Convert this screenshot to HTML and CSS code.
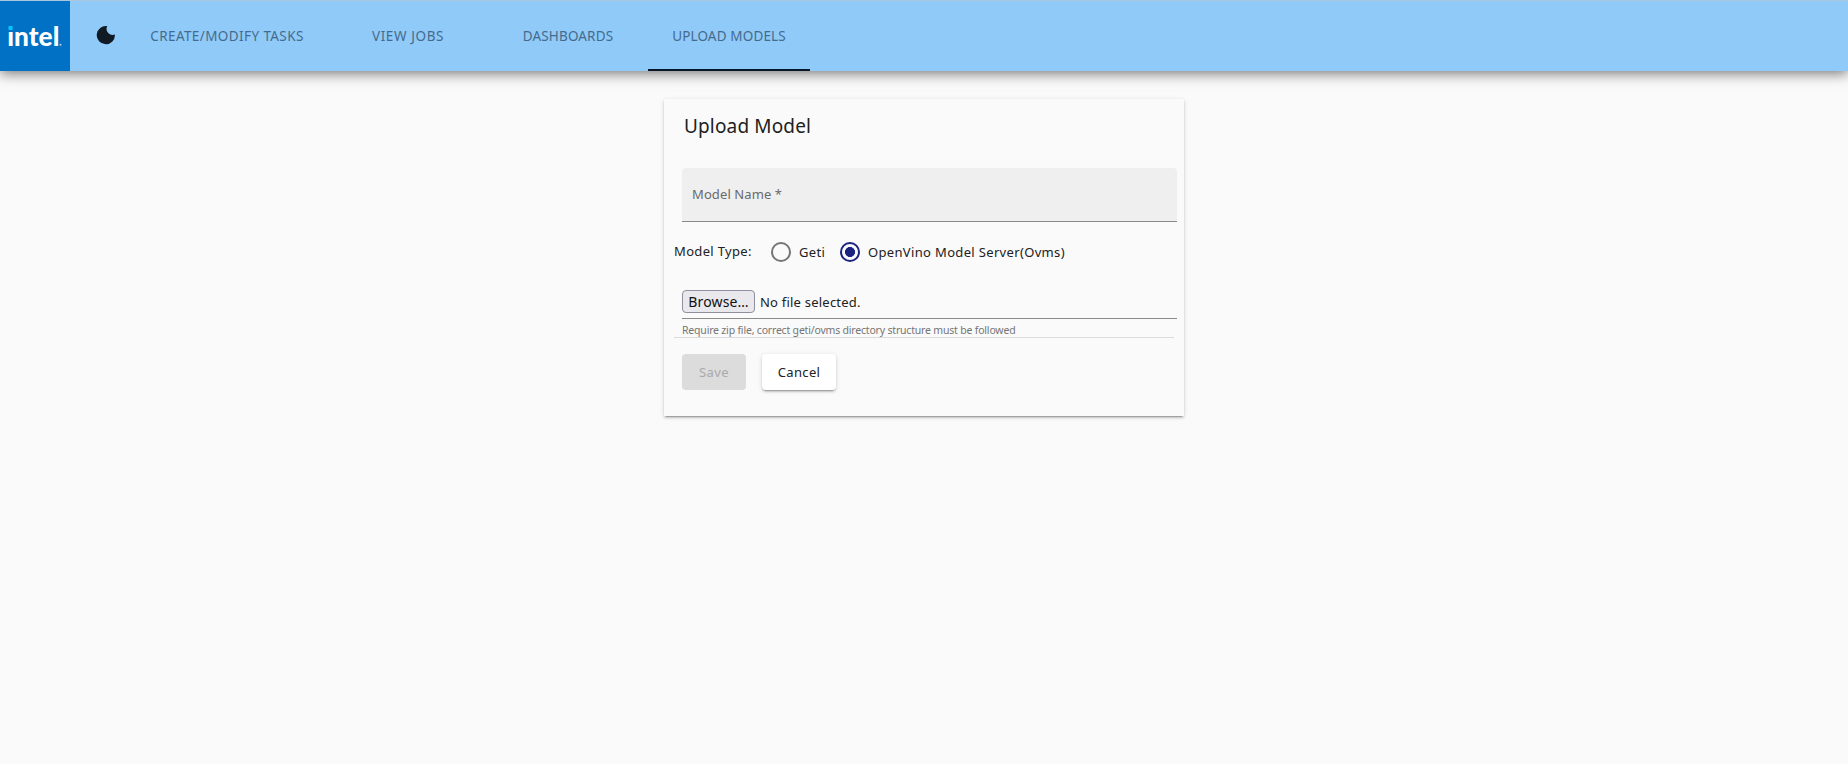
FILE: index.html
```
<!DOCTYPE html>
<html lang="en">
<head>
<meta charset="utf-8">
<title>Upload Model</title>
<link rel="stylesheet" href="styles.css">
</head>
<body>
<header class="toolbar">
  <svg class="logo" width="70" height="70" viewBox="0 0 70 70">
    <rect width="70" height="70" fill="#0071c5"/>
    <text class="logo-text" x="7.3" y="44.7" textLength="52" lengthAdjust="spacingAndGlyphs">intel</text>
    <rect x="7" y="22" width="7" height="8" fill="#0071c5"/>
    <rect x="8.5" y="25" width="4" height="4" fill="#00c7fd"/>
    <circle cx="60.5" cy="43.7" r="1" fill="#a9d3f2"/>
  </svg>
  <button class="theme" aria-label="Toggle theme">
    <svg width="20" height="20" viewBox="0 0 20 20"><path d="M11.2 1.1A6.2 6.2 0 0 0 18.9 9.6 9.1 9.1 0 1 1 11.2 1.1Z" fill="#0f1a24"/></svg>
  </button>
  <nav class="tabs">
    <a class="tab tab-tasks">CREATE/MODIFY TASKS</a>
    <a class="tab tab-jobs">VIEW JOBS</a>
    <a class="tab tab-dash">DASHBOARDS</a>
    <a class="tab active">UPLOAD MODELS</a>
  </nav>
</header>
<main class="card">
  <h1 class="title">Upload Model</h1>
  <div class="field">Model Name *</div>
  <div class="types">
    <span class="type-label">Model Type:</span>
    <i class="radio"></i><span class="geti">Geti</span>
    <i class="radio on"></i><span class="ovms">OpenVino Model Server(Ovms)</span>
  </div>
  <div class="file">
    <button class="browse">Browse…</button><span class="nofile">No file selected.</span>
  </div>
  <div class="hint">Require zip file, correct geti/ovms directory structure must be followed</div>
  <div class="actions">
    <button class="btn save">Save</button>
    <button class="btn cancel">Cancel</button>
  </div>
</main>
</body>
</html>
```
FILE: styles.css
```
* { box-sizing: border-box; }
body {
  margin: 0;
  min-height: 764px;
  background: #fafafa;
  color: #212121;
  font: 13px/20px "Noto Sans", sans-serif;
}
button { font: inherit; padding: 0; border: 0; }
.toolbar {
  height: 71px;
  display: flex;
  background: #90caf9;
  border-top: 1px solid #a9c6dc;
  box-shadow: 0 3px 12px rgba(0, 0, 0, .5);
}
.logo { display: block; }
.logo-text { font: 900 27px Lato, sans-serif; fill: #fff; }
.theme {
  width: 56px;
  padding: 4px 0 0 16px;
  background: none;
  display: flex;
  align-items: center;
  justify-content: center;
  height: 64px;
}
.tabs { display: flex; }
.tab {
  width: 160px;
  display: flex;
  align-items: center;
  justify-content: center;
  color: #456b8c;
  font-size: 13.5px;
  letter-spacing: .15px;
  white-space: nowrap;
}
.tab-tasks { width: 202px; letter-spacing: .4px; }
.tab-jobs { letter-spacing: .6px; }
.active { width: 162px; border-bottom: 2px solid #08162a; padding-top: 2px; }
.card {
  width: 520px;
  height: 317px;
  margin: 28px auto 0;
  padding-top: 15px;
  background: #fafafa;
  box-shadow: 0 3px 1px -2px rgba(0,0,0,.2), 0 2px 2px rgba(0,0,0,.14), 0 1px 5px rgba(0,0,0,.12);
}
.title { margin: 0 0 30px 20px; font-size: 19px; line-height: 24px; font-weight: 400; letter-spacing: .15px; }
.field {
  width: 495px;
  height: 54px;
  margin-left: 18px;
  padding: 16px 10px;
  background: #efefef;
  border-bottom: 1px solid #8a8a8a;
  border-radius: 4px 4px 0 0;
  color: #6a6a6a;
  letter-spacing: .1px;
}
.types { display: flex; align-items: center; height: 20px; margin: 20px 0 0 10px; white-space: nowrap; letter-spacing: .34px; }
.type-label { width: 97px; padding-bottom: 2px; }
.radio { width: 20px; height: 20px; border: 2px solid #757575; border-radius: 50%; }
.on { border-color: #1a237e; background: radial-gradient(circle, #1a237e 4.7px, transparent 5.3px); }
.geti { width: 49px; padding-left: 8px; }
.ovms { padding-left: 8px; }
.file {
  display: flex;
  width: 495px;
  height: 57px;
  margin-left: 18px;
  padding-top: 28px;
  border-bottom: 1px solid #8a8a8a;
}
.browse {
  width: 73px;
  height: 23px;
  border: 1px solid #8f8f9d;
  border-radius: 4px;
  background: #e9e9ed;
  color: #111;
  font-size: 14px;
  letter-spacing: .15px;
}
.nofile { margin-left: 5px; line-height: 25px; letter-spacing: .22px; }
.hint {
  width: 500px;
  height: 19px;
  margin-left: 10px;
  padding-left: 8px;
  border-bottom: 1px solid #dcdcdc;
  font-size: 10.5px;
  line-height: 22px;
  letter-spacing: -.19px;
  color: #757575;
}
.actions { display: flex; gap: 16px; margin: 16px 0 0 18px; }
.btn { height: 36px; border-radius: 4px; letter-spacing: .35px; }
.save { width: 64px; background: #dcdcdc; color: #aaa; }
.cancel {
  width: 74px;
  background: #fff;
  color: #212121;
  box-shadow: 0 3px 1px -2px rgba(0,0,0,.2), 0 2px 2px rgba(0,0,0,.14), 0 1px 5px rgba(0,0,0,.12);
}
```
